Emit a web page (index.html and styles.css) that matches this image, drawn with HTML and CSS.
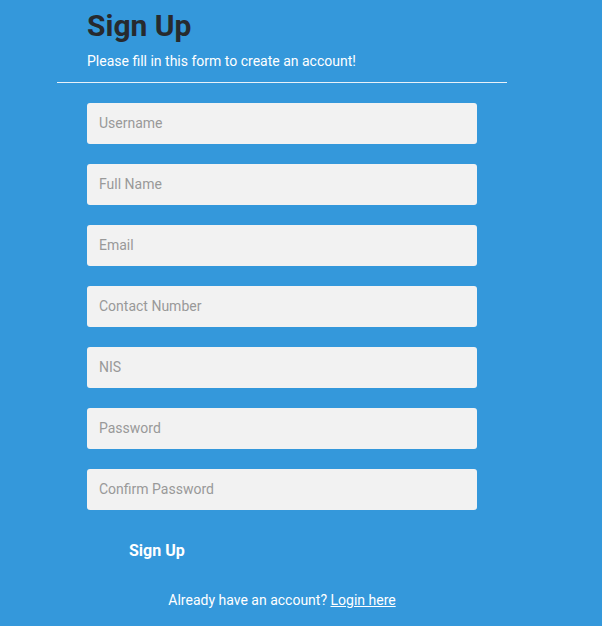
FILE: index.html
```html
<!DOCTYPE html>
<html>
<head>
<meta charset="utf-8">
<link rel="stylesheet" href="styles.css">
</head>
<body>
<div class="signup">
  <div class="head">
    <h1 class="title">Sign Up</h1>
    <p class="subtitle">Please fill in this form to create an account!</p>
  </div>
  <hr class="divider">
  <form class="form">
    <input class="field" type="text" placeholder="Username">
    <input class="field" type="text" placeholder="Full Name">
    <input class="field" type="text" placeholder="Email">
    <input class="field" type="text" placeholder="Contact Number">
    <input class="field" type="text" placeholder="NIS">
    <input class="field" type="password" placeholder="Password">
    <input class="field" type="password" placeholder="Confirm Password">
    <button class="submit" type="button">Sign Up</button>
    <p class="login">Already have an account? <a class="login-link" href="#">Login here</a></p>
  </form>
</div>
</body>
</html>
```
FILE: styles.css
```css
html, body {
  margin: 0;
  padding: 0;
  background: #3498db;
  font-family: Roboto, "Liberation Sans", sans-serif;
}
.signup {
  width: 450px;
  margin-left: 57px;
}
.head {
  padding: 0 30px;
}
.title {
  margin: 0;
  padding-top: 8px;
  font-size: 30px;
  line-height: 36px;
  font-weight: 700;
  color: #272a2e;
}
.subtitle {
  margin: 7px 0 0;
  font-size: 14px;
  line-height: 20px;
  color: #ffffff;
}
.divider {
  margin: 11px 0 0;
  border: 0;
  border-top: 1px solid #e8f1f9;
  height: 0;
}
.form {
  padding: 20px 30px 0;
  display: flex;
  flex-direction: column;
  gap: 20px;
}
.field {
  box-sizing: border-box;
  width: 390px;
  height: 41px;
  margin: 0;
  border: 0;
  border-radius: 3px;
  background: #f2f2f2;
  padding: 0 12px 2px 12px;
  font-family: Roboto, "Liberation Sans", sans-serif;
  font-size: 14px;
  color: #333;
  outline: none;
}
.field::placeholder {
  color: #999999;
}
.submit {
  align-self: flex-start;
  margin-top: 9px;
  padding: 0 0 0 42px;
  border: 0;
  background: transparent;
  color: #ffffff;
  font-family: Roboto, "Liberation Sans", sans-serif;
  font-size: 16px;
  font-weight: 700;
  line-height: 24px;
}
.login {
  margin: 7px 0 0;
  text-align: center;
  font-size: 14px;
  line-height: 20px;
  color: #ffffff;
}
.login-link {
  color: #ffffff;
  text-decoration: underline;
}
```
